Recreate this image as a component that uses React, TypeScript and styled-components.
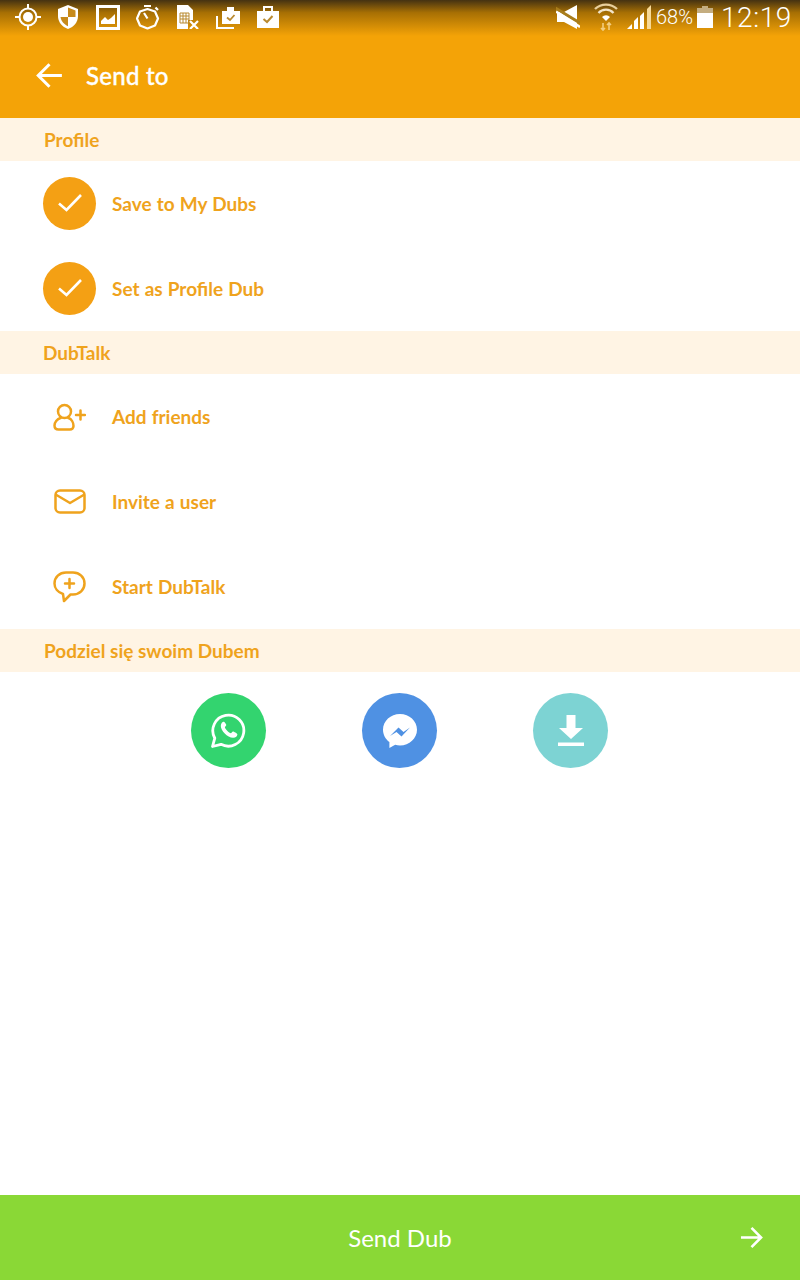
import React from 'react';
import styled, { createGlobalStyle } from 'styled-components';

const GlobalStyle = createGlobalStyle`
  html, body {
    margin: 0;
    padding: 0;
    background: #fff;
    font-family: "Lato", "Open Sans", sans-serif;
  }
`;

const Screen = styled.div`
  width: 800px;
  height: 1280px;
  display: flex;
  flex-direction: column;
  overflow: hidden;
  background: #fff;
`;

const Header = styled.header`
  height: 118px;
  flex: none;
  background: #f4a307;
  display: flex;
  flex-direction: column;
`;

const StatusBar = styled.div`
  height: 36px;
  display: flex;
  align-items: center;
  justify-content: space-between;
  padding: 0 8px 2px 8px;
  box-sizing: border-box;
  background: linear-gradient(to bottom, rgba(30, 25, 20, 0.82), rgba(60, 40, 0, 0.42) 35%, rgba(244, 163, 7, 0) 100%);
  color: #fff;
`;

const StatusGroup = styled.div`
  display: flex;
  align-items: center;
`;

const NotifySlot = styled.div`
  width: 40px;
  display: flex;
  justify-content: center;
`;

const SystemSlot = styled.div<{ $left: number }>`
  display: flex;
  margin-left: ${p => p.$left}px;
`;

const Battery = styled.span`
  font-family: "Roboto", sans-serif;
  font-weight: 300;
  font-size: 20px;
  margin-left: 4px;
`;

const Clock = styled.span`
  font-family: "Roboto", sans-serif;
  font-weight: 300;
  font-size: 28px;
  letter-spacing: 0.6px;
  margin-left: 8px;
`;

const TitleBar = styled.div`
  display: flex;
  align-items: center;
  padding: 9px 0 0 36px;
  height: 70px;
  box-sizing: border-box;
  gap: 23px;
`;

const Title = styled.h1`
  margin: 0;
  color: #fff;
  font-size: 24px;
  font-weight: 500;
  letter-spacing: 0.25px;
  -webkit-text-stroke: 0.35px #fff;
  line-height: 1;
`;

const SectionHeader = styled.div<{ $inset?: number }>`
  height: 43px;
  flex: none;
  background: #fff4e4;
  color: #efa31d;
  display: flex;
  align-items: center;
  padding-left: ${p => p.$inset ?? 44}px;
  font-size: 19px;
  font-weight: 700;
`;

const Row = styled.div`
  height: 85px;
  flex: none;
  display: flex;
  align-items: center;
  padding-left: 43px;
  gap: 16px;
`;

const RowLabel = styled.span`
  color: #efa31d;
  font-size: 19px;
  font-weight: 700;
  word-spacing: 0.5px;
`;

const CheckCircle = styled.div`
  width: 53px;
  height: 53px;
  border-radius: 50%;
  background: #f4a014;
  display: flex;
  align-items: center;
  justify-content: center;
  margin-top: -1px;
`;

const IconSlot = styled.div`
  width: 53px;
  height: 53px;
  display: flex;
  align-items: center;
  justify-content: center;
`;

const ShareRow = styled.div`
  display: grid;
  grid-template-columns: repeat(3, 171px);
  justify-content: center;
  justify-items: center;
  padding-top: 21px;
  margin-left: -1px;
`;

const ShareButton = styled.div<{ $bg: string }>`
  width: 75px;
  height: 75px;
  border-radius: 50%;
  background: ${p => p.$bg};
  display: flex;
  align-items: center;
  justify-content: center;
`;

const Spacer = styled.div`
  flex: 1;
`;

const Footer = styled.footer`
  height: 85px;
  flex: none;
  background: #8ad836;
  position: relative;
  display: flex;
  align-items: center;
  justify-content: center;
  color: #fff;
  font-size: 24px;
`;

const FooterArrow = styled.div`
  position: absolute;
  right: 37px;
  top: 31px;
  display: flex;
`;

const Arrow = ({ dir, size }: { dir: 'left' | 'right'; size: number }) => (
  <svg width={size} height={size} viewBox="0 0 24 24" fill="none" stroke="#fff" strokeWidth="2.700">
    {dir === 'left' ? <path d="M23 12H2M12 2 2 12l10 10" /> : <path d="M1 12h21M12 2l10 10-10 10" />}
  </svg>
);

const Check = () => (
  <svg width="24" height="18" viewBox="0 0 24 18" fill="none" stroke="#fff" strokeWidth="2.6">
    <path d="M1 9.500 8.500 16 23 1" />
  </svg>
);

const Gps = () => (
  <svg width="28" height="28" viewBox="0 0 28 28" fill="none" stroke="#fff">
    <circle cx="14" cy="14" r="8.500" strokeWidth="2" />
    <circle cx="14" cy="14" r="5" fill="#fff" stroke="none" />
    <path d="M14 1v5M14 22v5M1 14h5M22 14h5" strokeWidth="2" />
  </svg>
);

const Shield = () => (
  <svg width="24" height="26" viewBox="0 0 24 26">
    <path d="M12 1 2 5v7c0 6 4 11 10 13 6-2 10-7 10-13V5z" fill="#fff" />
    <path d="M12 3.500 19.500 6.500V13H12zM12 13H4.500c.6 4 3.500 7.500 7.500 9.200z" fill="#c78a1a" />
  </svg>
);

const Picture = () => (
  <svg width="24" height="25" viewBox="0 0 24 25">
    <path fillRule="evenodd" d="M0 0h24v25H0zM3 3v19h18V3z" fill="#fff" />
    <path d="M5 19v-3l4-4 3 3 3-2 4-4v10z" fill="#fff" />
  </svg>
);

const Timer = () => (
  <svg width="24" height="26" viewBox="0 0 24 26" fill="none" stroke="#fff" strokeWidth="2.200">
    <path d="M11.500 5 19 7.500l3 7-3 7-7.500 3-7.500-3-3-7 3-7z" strokeLinejoin="round" />
    <path d="M8 2h7M19.500 3.500 22 6M11.500 14.500 8 9" />
  </svg>
);

const SimOff = () => (
  <svg width="24" height="24" viewBox="0 0 24 24">
    <path d="M1 0h11l5 5v10h-5v9H1z" fill="#fff" />
    <path d="M4 8h9v10H4zM7 8v10M10 8v10M4 11h9M4 14h9" stroke="#b98a30" strokeWidth="1" fill="none" />
    <path d="M14 16l8 8M22 16l-8 8" stroke="#fff" strokeWidth="2.200" />
  </svg>
);

const BriefcaseStack = () => (
  <svg width="24" height="23" viewBox="0 0 24 23" fill="none">
    <path d="M6 5h5V1h7v4h6v13H6z" fill="#fff" />
    <path d="M11 11.500l3 2.500 4.500-5" stroke="#b98a30" strokeWidth="1.800" />
    <path d="M1 10v12h17" stroke="#fff" strokeWidth="2" />
  </svg>
);

const Briefcase = () => (
  <svg width="24" height="22" viewBox="0 0 24 22" fill="none">
    <path d="M1 5h6V0h10v5h6v17H1zM9 2v3h6V2z" fill="#fff" fillRule="evenodd" />
    <path d="M7.500 13l3.500 3 5.500-6" stroke="#b98a30" strokeWidth="2" />
  </svg>
);

const Mute = () => (
  <svg width="24" height="24" viewBox="0 0 24 24">
    <path d="M1 7h7L21 0v24L8 17H1z" fill="#fff" />
    <path d="M-1 3 24 18" stroke="#a87d1c" strokeWidth="3" />
    <path d="M0 6.500 24 22" stroke="#fff" strokeWidth="2.400" />
  </svg>
);

const Wifi = () => (
  <svg width="24" height="30" viewBox="0 0 24 30" fill="none">
    <path d="M1 7a16 16 0 0 1 22 0" stroke="#e8cf9c" strokeWidth="2.400" />
    <path d="M4.500 11a10 10 0 0 1 15 0" stroke="#f2e4c8" strokeWidth="2.200" />
    <path d="M8 15a5.500 5.500 0 0 1 8 0l-4 4z" fill="#fff" />
    <path d="M9 21v7M7 26l2 2 2-2M15 28v-7M13 23l2-2 2 2" stroke="#f3cd7f" strokeWidth="1.600" />
  </svg>
);

const Signal = () => (
  <svg width="25" height="24" viewBox="0 0 25 24">
    <path d="M0 24l5-5v5z" fill="#fff" />
    <path d="M7 24v-8l4-4v12z" fill="#fff" />
    <path d="M13 24V11l4-4v17z" fill="#fff" />
    <path d="M20 24V4l4-4v24z" fill="#f7d998" />
  </svg>
);

const BatteryIcon = () => (
  <svg width="16" height="22" viewBox="0 0 16 22">
    <path d="M5 0h6v2h5v5H0V2h5z" fill="#c4ad80" />
    <path d="M0 7h16v15H0z" fill="#fff" />
  </svg>
);

const AddFriend = () => (
  <svg width="33" height="28" viewBox="0 0 33 28" fill="none" stroke="#efa31d" strokeWidth="2.500" strokeLinecap="round">
    <circle cx="11.500" cy="8.500" r="6.500" />
    <path d="M7.500 15C4 16 1.500 19.500 1.500 22.500c0 2.500 1.500 4 4 4H17c2 0 3.500-1.500 3.500-3.500 0-3.500-2-7-5-8M23 12h9M27.500 7.500v9" />
  </svg>
);

const Mail = () => (
  <svg width="32" height="25" viewBox="0 0 32 25" fill="none" stroke="#efa31d" strokeWidth="2.500" strokeLinejoin="round" strokeLinecap="round">
    <rect x="1.500" y="1.500" width="29" height="22" rx="4.500" />
    <path d="M2.500 6 16 14 29.500 6" />
  </svg>
);

const ChatPlus = () => (
  <svg width="33" height="32" viewBox="0 0 33 32" fill="none" stroke="#efa31d" strokeWidth="2.500" strokeLinejoin="round" strokeLinecap="round">
    <path d="M13 1.500h7c6.500 0 11.500 4.500 11.500 11S26.500 23.500 20 23.500h-2.500L11 30l-1-7C5 21.500 1.500 17.500 1.500 12.500c0-6.500 5-11 11.500-11z" />
    <path d="M12 12.500h9M16.500 8v9" />
  </svg>
);

const WhatsApp = () => (
  <svg width="37" height="37" viewBox="0 0 37 37" fill="none">
    <path d="M2.500 34.500l2.300-8.300A15.500 15.500 0 1 1 11 32.300z" stroke="#fff" strokeWidth="2.800" strokeLinejoin="round" />
    <path d="M13.500 9.800c-.8 0-2.700 1.500-2.700 4.200 0 4.500 6.500 11.800 12.300 11.800 2.800 0 4.300-2 4.300-3.600 0-.6-3.700-2.700-4.400-2.700-.7 0-1.500 1.700-2.100 1.700-1.800 0-6-4.400-6-5.900 0-.7 1.400-1.400 1.400-2.200 0-.7-1.700-3.300-2.300-3.300z" fill="#fff" />
  </svg>
);

const Messenger = () => (
  <svg width="34" height="34" viewBox="0 0 34 34">
    <path d="M17 0C7.600 0 0 7 0 15.700c0 5 2.500 9.400 6.400 12.300V34l5.800-3.200c1.500.4 3.100.6 4.800.6 9.400 0 17-7 17-15.700S26.400 0 17 0z" fill="#fff" />
    <path d="M7 22l8.500-8.500 5 4.500L27 13.500 18.500 22.500l-5-4.500z" fill="#4f91e3" />
  </svg>
);

const Download = () => (
  <svg width="26" height="31" viewBox="0 0 26 31" fill="#fff">
    <path d="M8.500 0h9v13H25L13 24 1 13h7.500z" />
    <path d="M0 27.500h26V31H0z" />
  </svg>
);

const App = () => (
  <Screen>
    <GlobalStyle />
    <Header>
      <StatusBar>
        <StatusGroup>
          <NotifySlot><Gps /></NotifySlot>
          <NotifySlot><Shield /></NotifySlot>
          <NotifySlot><Picture /></NotifySlot>
          <NotifySlot><Timer /></NotifySlot>
          <NotifySlot><SimOff /></NotifySlot>
          <NotifySlot><BriefcaseStack /></NotifySlot>
          <NotifySlot><Briefcase /></NotifySlot>
        </StatusGroup>
        <StatusGroup>
          <SystemSlot $left={0}><Mute /></SystemSlot>
          <SystemSlot $left={14}><Wifi /></SystemSlot>
          <SystemSlot $left={9}><Signal /></SystemSlot>
          <Battery>68%</Battery>
          <SystemSlot $left={4}><BatteryIcon /></SystemSlot>
          <Clock>12:19</Clock>
        </StatusGroup>
      </StatusBar>
      <TitleBar>
        <Arrow dir="left" size={27} />
        <Title>Send to</Title>
      </TitleBar>
    </Header>

    <SectionHeader>Profile</SectionHeader>
    <Row>
      <CheckCircle><Check /></CheckCircle>
      <RowLabel>Save to My Dubs</RowLabel>
    </Row>
    <Row>
      <CheckCircle><Check /></CheckCircle>
      <RowLabel>Set as Profile Dub</RowLabel>
    </Row>

    <SectionHeader $inset={43}>DubTalk</SectionHeader>
    <Row>
      <IconSlot><AddFriend /></IconSlot>
      <RowLabel>Add friends</RowLabel>
    </Row>
    <Row>
      <IconSlot><Mail /></IconSlot>
      <RowLabel>Invite a user</RowLabel>
    </Row>
    <Row>
      <IconSlot><ChatPlus /></IconSlot>
      <RowLabel>Start DubTalk</RowLabel>
    </Row>

    <SectionHeader>Podziel się swoim Dubem</SectionHeader>
    <ShareRow>
      <ShareButton $bg="#33d46f"><WhatsApp /></ShareButton>
      <ShareButton $bg="#4f91e3"><Messenger /></ShareButton>
      <ShareButton $bg="#7dd3d3"><Download /></ShareButton>
    </ShareRow>

    <Spacer />
    <Footer>
      Send Dub
      <FooterArrow><Arrow dir="right" size={23} /></FooterArrow>
    </Footer>
  </Screen>
);

export default App;
